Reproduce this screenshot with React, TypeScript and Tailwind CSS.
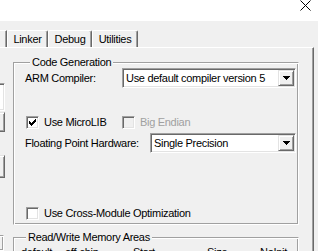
import React from "react"

// classic 3D edges: 1px border + 1px inset shadow
const sunken =
  "border border-t-[#a0a0a0] border-l-[#a0a0a0] border-r-white border-b-white shadow-[inset_1px_1px_0_#696969,inset_-1px_-1px_0_#e3e3e3]"
const raised =
  "border border-t-[#e3e3e3] border-l-[#e3e3e3] border-r-[#696969] border-b-[#696969] shadow-[inset_1px_1px_0_#fff,inset_-1px_-1px_0_#a0a0a0]"
const etched =
  "border border-t-[#a0a0a0] border-l-[#a0a0a0] border-r-white border-b-white shadow-[inset_1px_1px_0_#fff,inset_-1px_-1px_0_#a0a0a0]"

const tabs = [
  { name: "Linker", w: "w-[41px]" },
  { name: "Debug", w: "w-[44px]" },
  { name: "Utilities", w: "w-[46px]" },
]

function CheckBox({ checked = false, disabled = false }: { checked?: boolean; disabled?: boolean }) {
  return (
    <span
      className={`flex h-[13px] w-[13px] shrink-0 items-center justify-center ${sunken} ${
        disabled ? "bg-[#f0f0f0]" : "bg-white"
      }`}
    >
      {checked && (
        <svg width="7" height="7" viewBox="0 0 7 7" shapeRendering="crispEdges" aria-hidden="true">
          <path
            fill="#000"
            d="M6 0h1v1H6z M5 1h2v1H5z M0 2h1v1H0z M4 2h3v1H4z M0 3h2v1H0z M3 3h3v1H3z M0 4h5v1H0z M1 5h3v1H1z M2 6h1v1H2z"
          />
        </svg>
      )}
    </span>
  )
}

function Combo({ value, className }: { value: string; className: string }) {
  return (
    <div className={`flex h-[20px] bg-white p-[1px] ${sunken} ${className}`}>
      <span className="flex-1 truncate pl-[2px] leading-[16px]">{value}</span>
      <span className={`flex w-[16px] shrink-0 items-center justify-center bg-[#f0f0f0] ${raised}`}>
        <svg width="7" height="4" viewBox="0 0 7 4" shapeRendering="crispEdges" aria-hidden="true">
          <path fill="#000" d="M0 0h7v1H0z M1 1h5v1H1z M2 2h3v1H2z M3 3h1v1H3z" />
        </svg>
      </span>
    </div>
  )
}

export default function App() {
  return (
    <div className="flex h-[251px] w-[318px] flex-col overflow-hidden bg-[#f0f0f0] font-['Liberation_Sans',Arial,sans-serif] text-[11px] leading-[13px] tracking-[-0.3px] text-black">
      {/* caption */}
      <div className="flex h-[21px] shrink-0 justify-end bg-white pr-[7px]">
        <svg width="11" height="11" viewBox="0 0 11 11" aria-hidden="true">
          <path d="M0.5 0.5L10.5 10.5M10.5 0.5L0.5 10.5" stroke="#000" strokeWidth="1" />
        </svg>
      </div>

      {/* tab strip */}
      <div className="flex h-[26px] shrink-0 items-end">
        <div className="h-[17px] w-[7px] border-t border-r border-t-white border-r-[#696969] shadow-[inset_-1px_0_0_#a0a0a0]" />
        {tabs.map((t) => (
          <div
            key={t.name}
            className={`flex h-[17px] items-center justify-center rounded-t-[2px] border-t border-l border-r border-t-white border-l-white border-r-[#696969] shadow-[inset_-1px_0_0_#a0a0a0] ${t.w}`}
          >
            {t.name}
          </div>
        ))}
      </div>

      {/* tab page */}
      <div className="flex min-h-0 w-[314px] flex-1 border-t border-r border-t-white border-r-[#696969] shadow-[inset_-1px_0_0_#a0a0a0]">
        {/* right edges of the left-hand column */}
        <div className="flex w-[5px] shrink-0 flex-col">
          <div className={`-ml-[10px] mt-[35px] h-[28px] w-[15px] bg-white ${sunken}`} />
          <div className={`-ml-[10px] mt-[1px] h-[20px] w-[15px] ${raised}`} />
          <div className={`-ml-[10px] mt-[23px] h-[23px] w-[15px] ${raised}`} />
          <div className={`-ml-[10px] mt-[57px] w-[14px] flex-1 ${etched}`} />
        </div>

        <div className="ml-[8px] flex w-[286px] flex-col">
          {/* Code Generation */}
          <fieldset className={`mt-[8px] pb-[4px] pl-[11px] pr-[2px] ${etched}`}>
            <legend className="ml-[5px] bg-[#f0f0f0] px-[2px] leading-[12px]">Code Generation</legend>

            <div className="flex h-[20px] items-center">
              <span className="w-[97px]">ARM Compiler:</span>
              <Combo value="Use default compiler version 5" className="flex-1" />
            </div>

            <div className="mt-[28px] flex h-[13px] items-center">
              <div className="flex w-[97px] items-center">
                <span className="ml-[1px]">
                  <CheckBox checked />
                </span>
                <span className="ml-[5px]">Use MicroLIB</span>
              </div>
              <CheckBox disabled />
              <span className="ml-[5px] text-[#a0a0a0]">Big Endian</span>
            </div>

            <div className="mt-[4px] flex h-[20px] items-center">
              <span className="w-[125px]">Floating Point Hardware:</span>
              <Combo value="Single Precision" className="flex-1" />
            </div>

            <div className="mt-[54px] flex h-[13px] items-center">
              <span className="ml-[1px]">
                <CheckBox />
              </span>
              <span className="ml-[5px]">Use Cross-Module Optimization</span>
            </div>
          </fieldset>

          {/* Read/Write Memory Areas */}
          <fieldset className={`mt-[6px] flex-1 pl-[7px] ${etched}`}>
            <legend className="ml-[5px] bg-[#f0f0f0] px-[2px] leading-[12px]">Read/Write Memory Areas</legend>
            <div className="mt-[3px] flex">
              <span className="w-[44px]">default</span>
              <span className="w-[68px]">off-chip</span>
              <span className="w-[74px]">Start</span>
              <span className="w-[53px]">Size</span>
              <span>NoInit</span>
            </div>
          </fieldset>
        </div>
      </div>
    </div>
  )
}
